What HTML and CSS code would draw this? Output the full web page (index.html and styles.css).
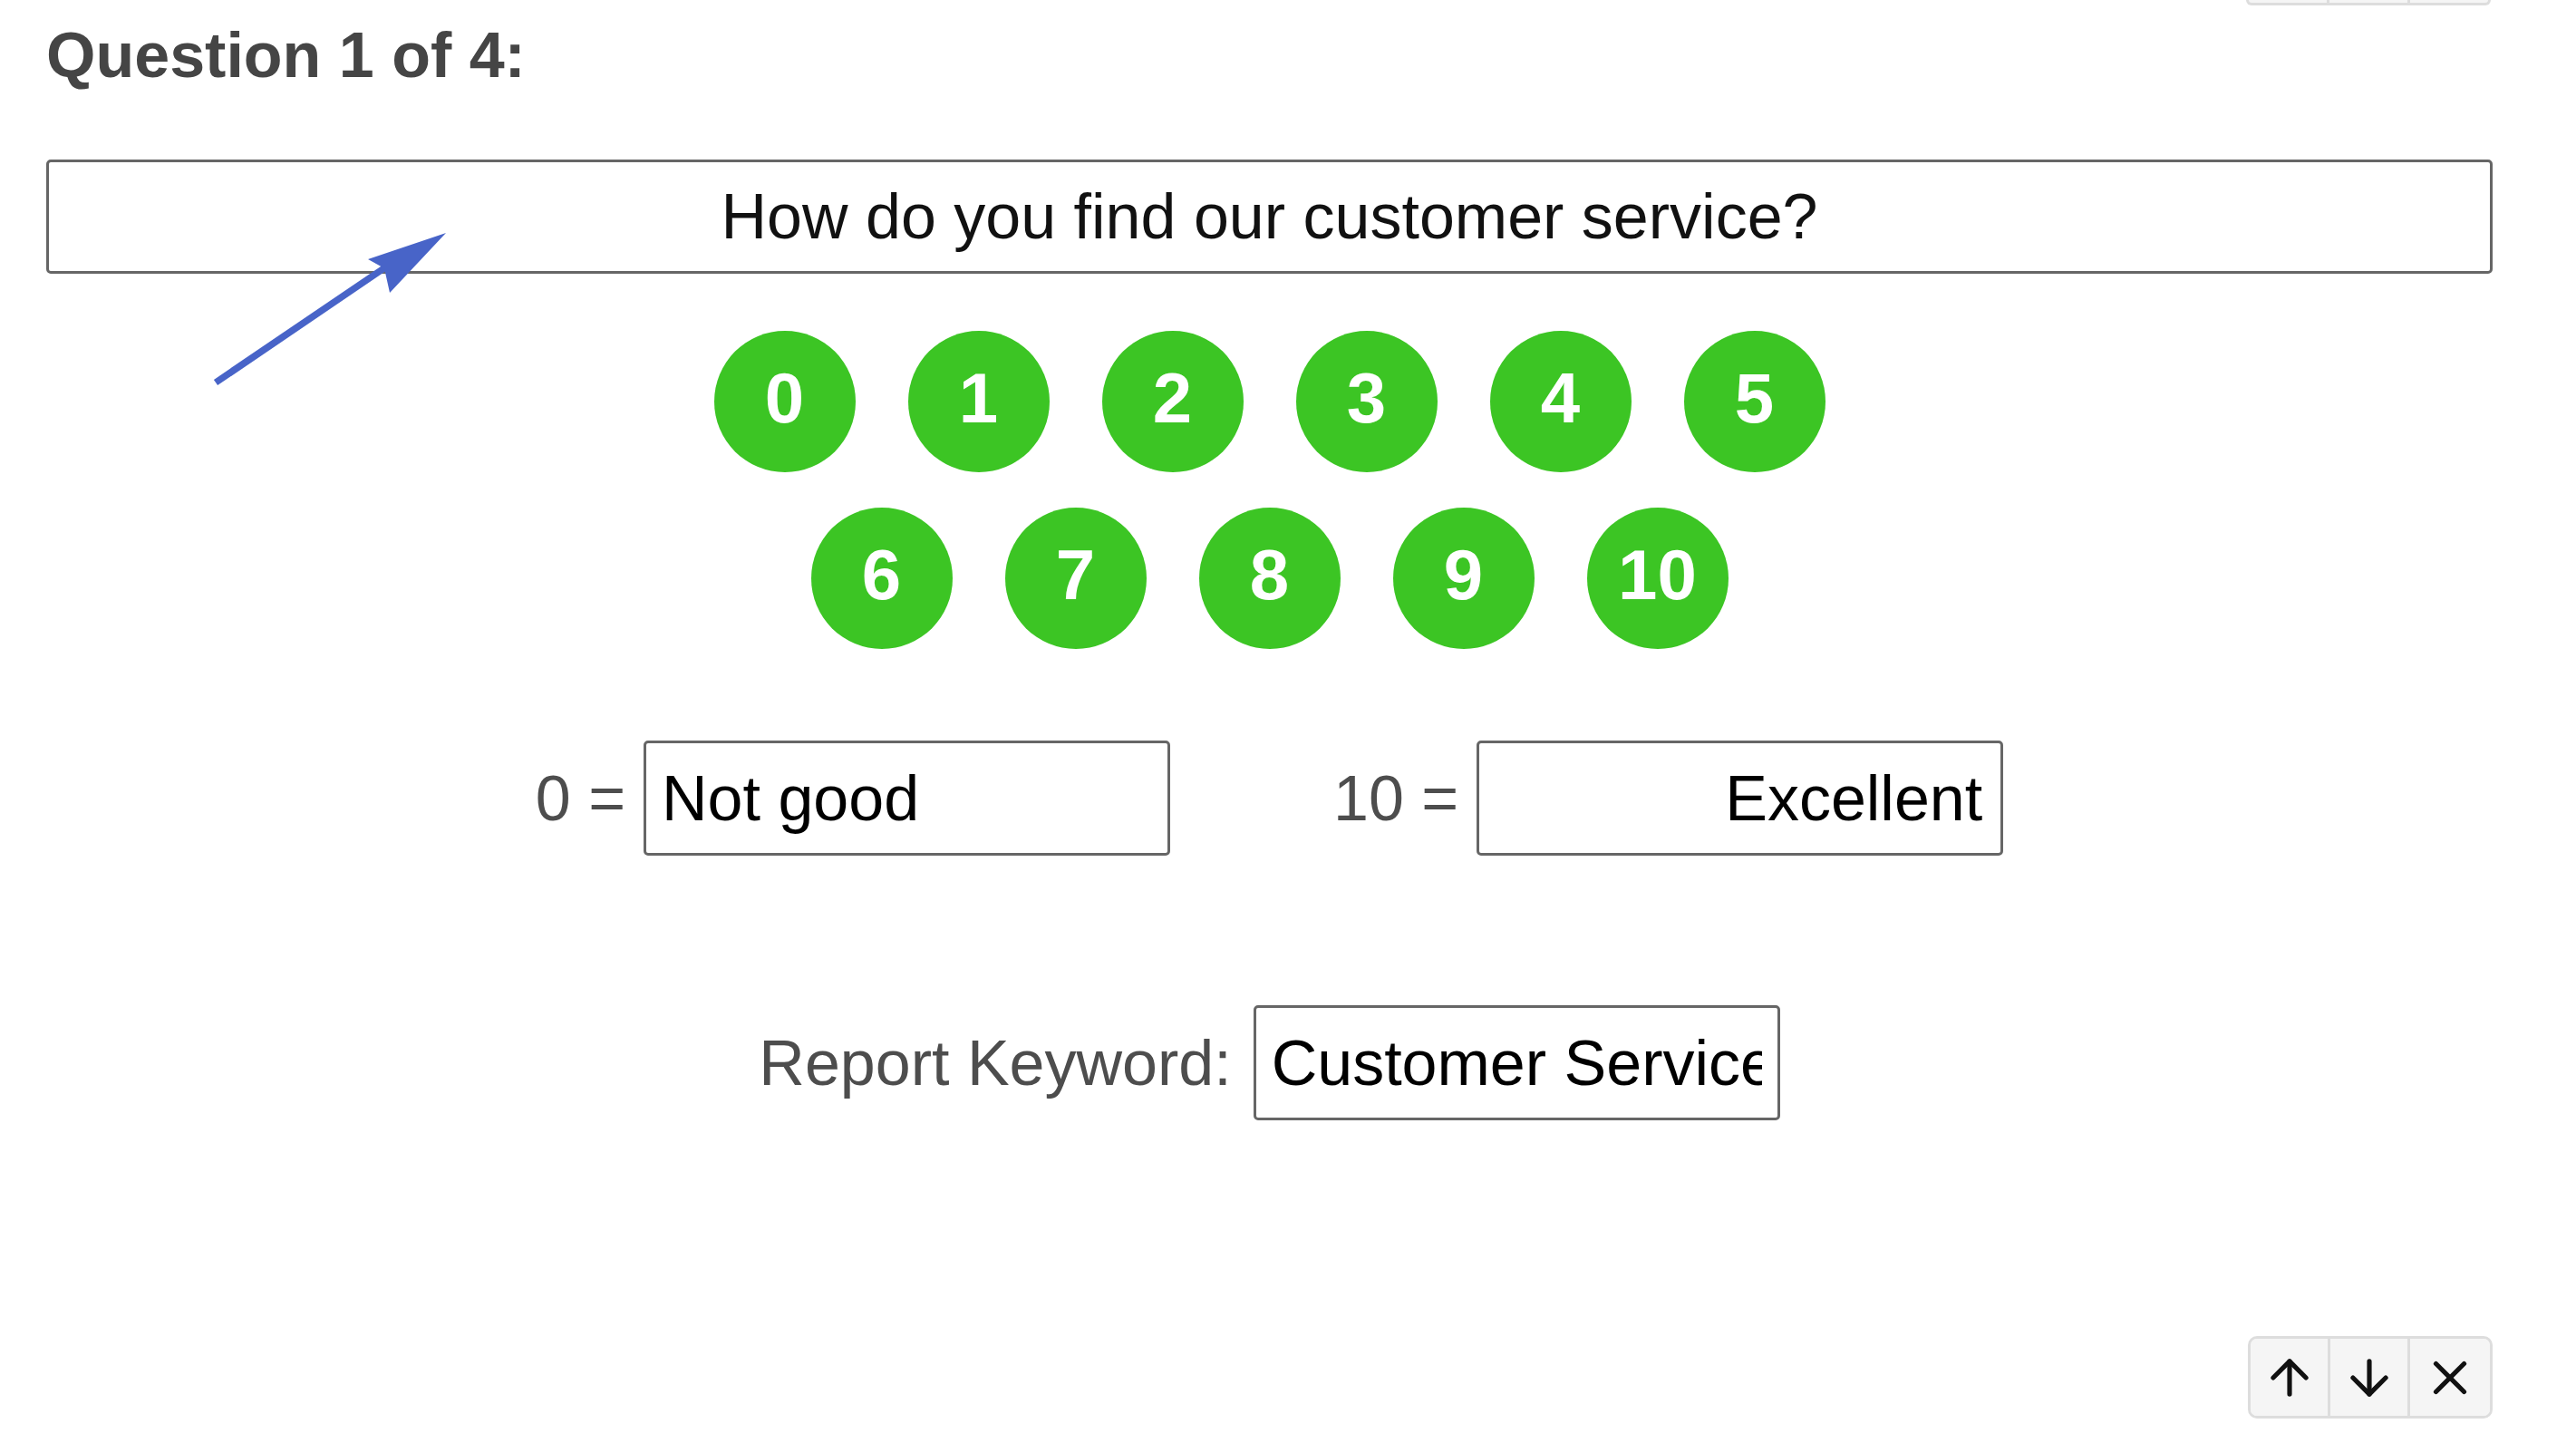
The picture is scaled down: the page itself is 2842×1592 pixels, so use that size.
FILE: index.html
```html
<!DOCTYPE html>
<html lang="en">
<head>
    <meta charset="UTF-8">
    <meta name="viewport" content="width=device-width, initial-scale=1.0">
    <title>Survey Question Editor</title>
    <link rel="stylesheet" href="styles.css">
</head>
<body>
    <div class="page">
        <!-- tail of the previous question's toolbar -->
        <div class="prev-toolbar">
            <span></span><span></span><span></span>
        </div>

        <h2 class="question-title">Question 1 of 4:</h2>

        <div class="question-box">How do you find our customer service?</div>

        <div class="scale">
            <div class="scale-dot">0</div>
            <div class="scale-dot">1</div>
            <div class="scale-dot">2</div>
            <div class="scale-dot">3</div>
            <div class="scale-dot">4</div>
            <div class="scale-dot">5</div>
            <div class="scale-dot">6</div>
            <div class="scale-dot">7</div>
            <div class="scale-dot">8</div>
            <div class="scale-dot">9</div>
            <div class="scale-dot">10</div>
        </div>

        <div class="labels-row">
            <div class="label-group">
                <span class="field-label">0 =</span>
                <input class="field-input" type="text" value="Not good" readonly>
            </div>
            <div class="label-group">
                <span class="field-label">10 =</span>
                <input class="field-input align-right" type="text" value="Excellent" readonly>
            </div>
        </div>

        <div class="keyword-row">
            <span class="field-label">Report Keyword:</span>
            <input class="field-input" type="text" value="Customer Service" readonly>
        </div>

        <div class="toolbar-row">
            <div class="toolbar">
                <button class="tool-btn" title="Move up">
                    <svg viewBox="0 0 24 24" width="62" height="62" fill="none" stroke="#111" stroke-width="2" stroke-linecap="round" stroke-linejoin="round"><path d="M12 19V5"/><path d="M5 12l7-7 7 7"/></svg>
                </button>
                <button class="tool-btn" title="Move down">
                    <svg viewBox="0 0 24 24" width="62" height="62" fill="none" stroke="#111" stroke-width="2" stroke-linecap="round" stroke-linejoin="round"><path d="M12 5v14"/><path d="M19 12l-7 7-7-7"/></svg>
                </button>
                <button class="tool-btn" title="Remove">
                    <svg viewBox="0 0 24 24" width="62" height="62" fill="none" stroke="#111" stroke-width="2" stroke-linecap="round" stroke-linejoin="round"><path d="M18 6 6 18"/><path d="M6 6l12 12"/></svg>
                </button>
            </div>
        </div>

        <!-- annotation arrow -->
        <svg class="annotation" width="600" height="450" viewBox="0 0 600 450">
            <line x1="238" y1="422" x2="428" y2="293" stroke="#4864c8" stroke-width="7.5"/>
            <polygon points="492,257 406,286 424,296 430,323" fill="#4864c8"/>
        </svg>
    </div>
</body>
</html>
```

FILE: styles.css
```css
* {
    margin: 0;
    padding: 0;
    box-sizing: border-box;
}

body {
    font-family: 'Liberation Sans', Arial, Helvetica, sans-serif;
    background: #fff;
    color: #111;
}

.page {
    position: relative;
    padding: 0 92px 0 51px;
    min-height: 100vh;
}

.prev-toolbar {
    display: flex;
    width: 270px;
    height: 6px;
    margin-left: auto;
    margin-right: 2px;
    background: #f5f5f5;
    border: 3px solid #ddd;
    border-top: none;
    border-radius: 0 0 10px 10px;
}

.prev-toolbar span {
    flex: 1;
    border-right: 3px solid #ddd;
}

.prev-toolbar span:last-child {
    border-right: none;
}

.question-title {
    margin-top: 15px;
    font-size: 70px;
    line-height: 80px;
    font-weight: bold;
    color: #454545;
}

.question-box {
    margin-top: 75px;
    height: 126px;
    border: 3px solid #666;
    border-radius: 5px;
    font-size: 70px;
    line-height: 120px;
    text-align: center;
    color: #111;
}

.scale {
    display: flex;
    flex-wrap: wrap;
    justify-content: center;
    gap: 39px 58px;
    max-width: 1300px;
    margin: 63px auto 0;
}

.scale-dot {
    width: 156px;
    height: 156px;
    border-radius: 50%;
    background: #3cc524;
    color: #fff;
    font-size: 78px;
    font-weight: bold;
    display: flex;
    align-items: center;
    justify-content: center;
    padding-bottom: 7px;
}

.labels-row {
    display: flex;
    justify-content: center;
    gap: 180px;
    margin-top: 101px;
}

.label-group {
    display: flex;
    align-items: center;
    gap: 20px;
}

.field-label {
    font-size: 70px;
    color: #4d4d4d;
}

.field-input {
    width: 581px;
    height: 127px;
    border: 3px solid #666;
    border-radius: 5px;
    padding: 0 17px;
    font-family: 'Liberation Sans', Arial, Helvetica, sans-serif;
    font-size: 70px;
    color: #000;
    background: #fff;
    outline: none;
}

.align-right {
    text-align: right;
    padding-right: 20px;
}

.keyword-row {
    display: flex;
    justify-content: center;
    align-items: center;
    gap: 24px;
    margin-top: 165px;
}

.toolbar-row {
    display: flex;
    justify-content: flex-end;
    margin-top: 238px;
}

.toolbar {
    display: flex;
    height: 91px;
    border: 3px solid #ddd;
    border-radius: 10px;
    background: #f5f5f5;
    overflow: hidden;
}

.tool-btn {
    width: 88px;
    height: 100%;
    border: none;
    border-right: 3px solid #ddd;
    background: #f5f5f5;
    display: flex;
    align-items: center;
    justify-content: center;
    cursor: pointer;
}

.tool-btn:last-child {
    border-right: none;
}

.annotation {
    position: absolute;
    left: 0;
    top: 0;
    pointer-events: none;
}
```
